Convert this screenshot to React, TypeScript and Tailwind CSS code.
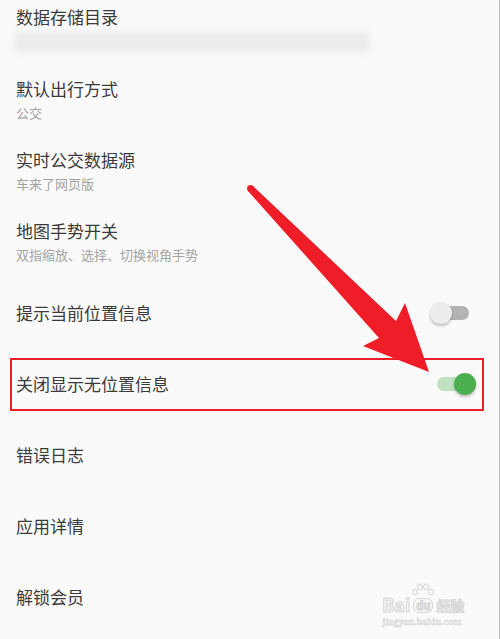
import React from "react";

const font = { fontFamily: '"Noto Sans CJK SC", "Noto Sans", sans-serif' };

type Item = { title: string; sub?: string; blur?: boolean; toggle?: "on" | "off" };

const items: Item[] = [
  { title: "数据存储目录", blur: true },
  { title: "默认出行方式", sub: "公交" },
  { title: "实时公交数据源", sub: "车来了网页版" },
  { title: "地图手势开关", sub: "双指缩放、选择、切换视角手势" },
  { title: "提示当前位置信息", toggle: "off" },
  { title: "关闭显示无位置信息", toggle: "on" },
  { title: "错误日志" },
  { title: "应用详情" },
  { title: "解锁会员" },
];

const Switch = ({ on }: { on: boolean }) => (
  <div className="relative flex h-6 w-12 items-center">
    <div
      className={
        "absolute left-2 right-2 h-[14px] rounded-full " +
        (on ? "bg-[#bfe2c0]" : "bg-[#b3b3b3]")
      }
    />
    <div
      className={
        "absolute h-[22px] w-[22px] rounded-full shadow-[0_2px_3px_rgba(0,0,0,0.25)] " +
        (on ? "right-px bg-[#4caf50]" : "left-px bg-[#ededed]")
      }
    />
  </div>
);

const Row = ({ item }: { item: Item }) => (
  <div className="flex h-[71px] items-center justify-between pl-4 pr-[22px]">
    <div className="flex flex-col">
      <div className="text-[17px] leading-[24px] text-[#3b3b3b]">{item.title}</div>
      {item.sub && (
        <div className="mt-[3px] text-[13px] leading-[18px] text-[#a3a3a3]">{item.sub}</div>
      )}
      {item.blur && (
        <div className="mt-[3px] -ml-[2px] h-[21px] w-[356px] rounded-sm bg-[#ececec] blur-[3px]" />
      )}
    </div>
    {item.toggle && <Switch on={item.toggle === "on"} />}
  </div>
);

const Watermark = () => (
  <div className="absolute left-[382px] top-[583px] flex flex-col items-start" style={font}>
    <div className="flex h-[30px] items-end">
      <span className="text-[18px] font-bold leading-[18px] text-[#f7f7f7] [-webkit-text-stroke:1px_#d6d6d6]">
        Bai
      </span>
      <span className="relative mx-[1px] flex h-[30px] w-[24px] items-end justify-center">
        <svg className="absolute left-0 top-0" width="24" height="16" viewBox="0 0 24 16">
          <g fill="#f7f7f7" stroke="#d6d6d6" strokeWidth="1">
            <ellipse cx="4" cy="9" rx="2.5" ry="3" />
            <ellipse cx="9" cy="4" rx="2.5" ry="3" />
            <ellipse cx="15" cy="4" rx="2.5" ry="3" />
            <ellipse cx="20" cy="9" rx="2.5" ry="3" />
          </g>
        </svg>
        <span className="relative rounded-[6px] border border-[#d6d6d6] bg-[#f7f7f7] px-[2px] text-[11px] font-bold leading-[13px] text-[#f7f7f7] [-webkit-text-stroke:1px_#d0d0d0]">
          du
        </span>
      </span>
      <span className="text-[14px] font-bold leading-[15px] text-[#f7f7f7] [-webkit-text-stroke:1px_#d6d6d6]">
        经验
      </span>
    </div>
    <div
      className="mt-[4px] text-[10px] font-bold leading-[10px] text-[#f7f7f7] [-webkit-text-stroke:0.6px_#d6d6d6]"
      style={{ fontFamily: '"Liberation Serif", serif' }}
    >
      jingyan.baidu.com
    </div>
  </div>
);

export default function App() {
  return (
    <div
      className="relative h-[639px] w-[500px] overflow-hidden border-r border-[#bdbdbd] bg-[#fafafa]"
      style={font}
    >
      <div className="-mt-[7px] flex flex-col">
        {items.map((it) => (
          <Row key={it.title} item={it} />
        ))}
      </div>

      {/* annotation box */}
      <div className="absolute left-[10px] top-[358px] h-[53px] w-[474px] border-2 border-[#ee1d29]" />

      {/* annotation arrow */}
      <svg className="absolute left-0 top-0" width="500" height="639" viewBox="0 0 500 639">
        <path
          d="M248 191 L379 338 L363 346 L429 372 L405 303 L396 321 L253 186 Z"
          fill="#ee1d27"
        />
        <circle cx="250.5" cy="188.5" r="3.4" fill="#ee1d27" />
      </svg>

      <Watermark />
    </div>
  );
}
